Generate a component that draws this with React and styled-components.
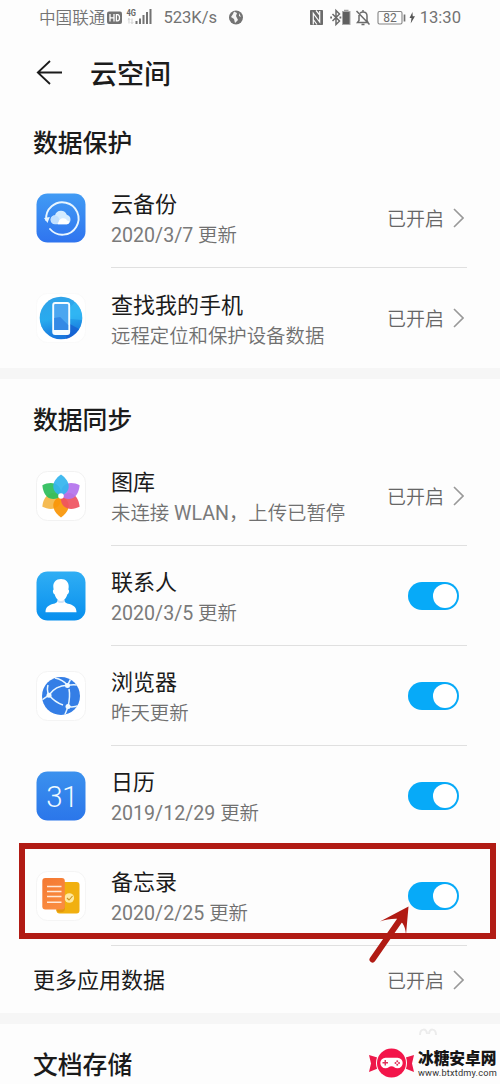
import React from "react";
import styled, { createGlobalStyle } from "styled-components";

const GlobalStyle = createGlobalStyle`
  * { box-sizing: border-box; }
  body { margin: 0; background: #fdfdfd; overflow: hidden; }
`;

const Screen = styled.main`
  position: relative;
  width: 500px;
  height: 1084px;
  overflow: hidden;
  background: #fdfdfd;
  color: #1b1b1b;
  font-family: Roboto, "Noto Sans CJK SC", sans-serif;
  white-space: nowrap;
`;

const StatusBar = styled.header`
  display: flex;
  align-items: center;
  height: 35px;
  padding: 0 39px 0 39px;
  color: #737373;
  font-size: 16.6px;
  line-height: 35px;
`;

const Carrier = styled.span`
  padding-top: 2px;
  font-weight: 350;
`;

const StatusIcon = styled.svg`
  display: block;
  flex: none;
  width: ${(p) => p.$w}px;
  height: 20px;
  margin-left: ${(p) => p.$gap || 0}px;
  overflow: visible;
`;

const Speed = styled.span`
  margin-left: 11px;
  font-size: 16.6px;
`;

const StatusRight = styled.div`
  display: flex;
  align-items: center;
  margin-left: auto;
`;

const Clock = styled.span`
  margin-left: 5px;
  font-size: 16.6px;
`;

const TitleBar = styled.div`
  display: flex;
  align-items: center;
  gap: 27px;
  height: 76px;
  padding-left: 36px;
`;

const PageTitle = styled.h1`
  margin: 0;
  padding-top: 4px;
  font-size: 27px;
  font-weight: 500;
  line-height: 40px;
`;

const SectionTitle = styled.h2`
  height: ${(p) => p.$h}px;
  margin: 0;
  padding: ${(p) => p.$top}px 0 0 33px;
  font-size: 24.8px;
  font-weight: 500;
  line-height: 36px;
`;

const Band = styled.div`
  height: ${(p) => p.$h}px;
  background: #f6f6f6;
`;

const Row = styled.div`
  display: flex;
  height: 100px;
  padding: 0 33px 0 36px;
`;

const AppIcon = styled.svg`
  display: block;
  flex: none;
  width: 50px;
  height: 50px;
  margin: 25px 25px 0 0;
  overflow: visible;
`;

const RowBody = styled.div`
  display: flex;
  flex: 1;
  align-items: center;
  justify-content: space-between;
  border-bottom: 1px solid ${(p) => (p.$last ? "transparent" : "#e0e0e0")};
`;

const RowTitle = styled.div`
  font-size: 22px;
  line-height: 30px;
`;

const RowNote = styled.div`
  margin-top: 1px;
  color: #707070;
  font-size: 19.4px;
  font-weight: 350;
  line-height: 30px;
`;

const Latin = styled.span`
  color: #7a7a7a;
  font-size: 19.6px;
  font-weight: 400;
`;

const RowText = styled.div`
  padding-top: ${(p) => (p.$last ? 8 : 6.5)}px;
`;

const StatusLink = styled.div`
  display: flex;
  align-items: center;
  gap: 9px;
  padding-right: 3px;
  color: #666;
  font-size: 19px;
  font-weight: 350;
  line-height: 30px;
`;

const LinkLabel = styled.span`
  padding-top: 4px;
`;

const Switch = styled.div`
  display: flex;
  align-items: center;
  justify-content: flex-end;
  width: 51px;
  height: 28px;
  margin: 1px 8px 0 0;
  padding-right: 2.5px;
  border-radius: 14px;
  background: #07aaf8;
`;

const Knob = styled.span`
  width: 24px;
  height: 24px;
  border-radius: 50%;
  background: #fff;
`;

const MoreRow = styled.div`
  display: flex;
  align-items: center;
  justify-content: space-between;
  height: 67px;
  padding: 0 33px;
  font-size: 22px;
`;

const MoreLabel = styled.span`
  padding-bottom: 4px;
`;

const Highlight = styled.div`
  position: absolute;
  left: 19px;
  top: 843px;
  width: 477px;
  height: 96px;
  border: 6px solid #b11b14;
`;

const Pointer = styled.svg`
  position: absolute;
  left: 366px;
  top: 904px;
  width: 46px;
  height: 62px;
`;

const FaintMark = styled.svg`
  position: absolute;
  left: 418px;
  top: 1027px;
`;

const Brand = styled.div`
  position: absolute;
  left: 369px;
  top: 1047px;
  display: flex;
  align-items: center;
  gap: 4px;
`;

const BrandName = styled.div`
  color: #151515;
  font-family: "Noto Sans CJK SC", sans-serif;
  font-size: 15.7px;
  font-weight: 900;
  line-height: 19px;
`;

const BrandUrl = styled.div`
  color: #333;
  font-family: Roboto, sans-serif;
  font-size: 9.2px;
  letter-spacing: 0.2px;
  line-height: 11px;
`;

function Tile({ fill = "#fff", stroke = "none" }) {
  return <rect x="0.5" y="0.5" width="49" height="49" rx="11" fill={fill} stroke={stroke} />;
}

function BackupIcon() {
  return (
    <AppIcon viewBox="0 0 50 50">
      <defs>
        <linearGradient id="backup" x2="0" y2="1">
          <stop stopColor="#419bf4" /><stop offset="1" stopColor="#2f74ef" />
        </linearGradient>
      </defs>
      <Tile fill="url(#backup)" />
      <path d="M10.200 27A16.200 16.200 0 1 1 14 36" fill="none" stroke="#e8f6ff" strokeWidth="1.900" strokeLinecap="round" />
      <path d="M8 25l5.800-1-2.300 6z" fill="#e8f6ff" />
      <path d="M19 31.200a4.500 4.500 0 0 1 0-9 6.300 6.300 0 0 1 11.800-.5 4.900 4.900 0 0 1 0 9.500z" fill="#d5ecff" />
      <path d="M22 31.200c0-7 8-7.500 9-3.700 3 0 3 3.700 0 3.700z" fill="#fff" />
      <circle cx="19" cy="26.800" r="4.200" fill="#b8dcff" opacity=".7" />
    </AppIcon>
  );
}

function FindPhoneIcon() {
  return (
    <AppIcon viewBox="0 0 50 50">
      <defs>
        <linearGradient id="find" x2="0.2" y2="1">
          <stop stopColor="#31a1e8" /><stop offset=".55" stopColor="#28abee" /><stop offset="1" stopColor="#1776dd" />
        </linearGradient>
      </defs>
      <Tile stroke="#fafafa" />
      <circle cx="25" cy="25" r="21.300" fill="url(#find)" />
      <path d="M25 25L39 9a21.300 21.300 0 0 1 7 18z" fill="#36bcf6" opacity=".6" />
      <path d="M32 30l11 6a21.300 21.300 0 0 1-13 10z" fill="#1559ce" opacity=".65" />
      <rect x="17.200" y="10" width="16" height="31" rx="2" fill="#4ba6f0" stroke="#f5fcff" strokeWidth="1.900" />
      <path d="M18.200 37V25l6-1 8 8v5z" fill="#3489e5" />
      <path d="M17.500 37h15.400v3.500H17.500z" fill="#f5fcff" />
    </AppIcon>
  );
}

const PETALS = [
  [240, "#f4b646"],
  [180, "#f99608"],
  [300, "#2dbd5b"],
  [120, "#ef5360"],
  [60, "#b473ed"],
  [0, "#35b5ee"],
];

function GalleryIcon() {
  return (
    <AppIcon viewBox="0 0 50 50">
      <Tile stroke="#f2f2f2" />
      {PETALS.map(([angle, color]) => (
        <path
          key={angle}
          d="M25 25c-3.500-1.500-6.800-4-7.600-8C16.500 11.500 20.500 6.500 25 3.500c4.500 3 8.500 8 7.600 13.500-.8 4-4.100 6.500-7.600 8z"
          fill={color}
          opacity=".93"
          transform={`rotate(${angle} 25 25)`}
        />
      ))}
      <circle cx="25" cy="25" r="2.800" fill="#fff" />
    </AppIcon>
  );
}

function ContactsIcon() {
  return (
    <AppIcon viewBox="0 0 50 50">
      <defs>
        <linearGradient id="contacts" x2="0" y2="1">
          <stop stopColor="#30aef4" /><stop offset="1" stopColor="#078fee" />
        </linearGradient>
      </defs>
      <Tile fill="url(#contacts)" />
      <path d="M9.500 41.300c0-4.800 2.800-6.800 7-8.200 3.700-1.200 5-1.800 5-3.700h7c0 1.900 1.300 2.500 5 3.700 4.200 1.400 7 3.400 7 8.200z" fill="#fff" />
      <path d="M21.500 28.500h7v2c-1 2-6 2-7 0z" fill="#d5e5f7" />
      <path d="M25 8c5 0 8 3.300 7.700 8l-.3 2.500c1.300.7.5 4.500-1 4.800C30.500 27 28 30 25 30s-5.500-3-6.400-6.700c-1.500-.3-2.300-4.100-1-4.800l-.3-2.500C17 11.300 20 8 25 8z" fill="#fff" />
    </AppIcon>
  );
}

function BrowserIcon() {
  return (
    <AppIcon viewBox="0 0 50 50">
      <defs>
        <clipPath id="globe"><circle cx="25" cy="25" r="19" /></clipPath>
      </defs>
      <Tile stroke="#f4f4f4" />
      <circle cx="25" cy="25" r="19" fill="#347ee6" />
      <g clipPath="url(#globe)" fill="none" stroke="#e8f6ff" strokeWidth="1.500">
        <path d="M19 7c5 1 9 3 12.500 7.200 3-.5 6-1 10-.2" />
        <path d="M31.500 14.400l3-6" />
        <path d="M13 24c4-6 10-9.500 18.500-9.800" />
        <path d="M6 29l7-5c-2-3-2-6-1-10" />
        <path d="M13 24c4 5 8 8 14 10" />
        <path d="M33 18c1 5 .6 11-1 17.500" />
        <path d="M28 46c1-3 3-7 4-10.500 4 1 7 .5 11-1" />
      </g>
      <circle cx="31.500" cy="14.400" r="2.500" fill="#f2faff" />
      <circle cx="13" cy="24.300" r="2.500" fill="#f2faff" />
      <circle cx="32" cy="35.500" r="2.500" fill="#f2faff" />
    </AppIcon>
  );
}

function CalendarIcon() {
  return (
    <AppIcon viewBox="0 0 50 50">
      <defs>
        <linearGradient id="calendar" x2="0" y2="1">
          <stop stopColor="#3b91ee" /><stop offset="1" stopColor="#2b76ea" />
        </linearGradient>
      </defs>
      <Tile fill="url(#calendar)" />
      <text x="26" y="35.800" textAnchor="middle" fill="#eefaff" fontFamily="Roboto, sans-serif" fontSize="29.500" fontWeight="300" letterSpacing="-0.600">31</text>
    </AppIcon>
  );
}

function NotesIcon() {
  return (
    <AppIcon viewBox="0 0 50 50">
      <defs>
        <linearGradient id="notes" x2="0.5" y2="1">
          <stop stopColor="#f47832" /><stop offset="1" stopColor="#fa8c40" />
        </linearGradient>
      </defs>
      <Tile stroke="#f5f5f5" />
      <rect x="20.500" y="11" width="23" height="31.500" rx="3" fill="#f1b010" />
      <path d="M20.500 29H29v9c0 3-4 4.500-8.500 2z" fill="#e4980f" />
      <circle cx="33.300" cy="27" r="4.800" fill="#ffe9a0" />
      <path d="M31 27l2 2 3.500-4" fill="none" stroke="#c89422" strokeWidth="1.100" />
      <rect x="6.300" y="7" width="22.500" height="31.500" rx="3" fill="url(#notes)" />
      <path d="M11 15.400h14.500M11 20.600h14.500M11 25.600h14.500M11 31.200h14.500" stroke="#ffe9d8" strokeWidth="1.500" />
    </AppIcon>
  );
}

function Enabled() {
  return (
    <StatusLink>
      <LinkLabel>已开启</LinkLabel>
      <svg width="11" height="20" viewBox="0 0 11 20">
        <path d="M1 1l9 9-9 9" fill="none" stroke="#999" strokeWidth="1.600" />
      </svg>
    </StatusLink>
  );
}

function Item({ icon: Icon, title, note, toggle, last }) {
  return (
    <Row>
      <Icon />
      <RowBody $last={last}>
        <RowText $last={last}>
          <RowTitle>{title}</RowTitle>
          <RowNote>{note}</RowNote>
        </RowText>
        {toggle ? <Switch><Knob /></Switch> : <Enabled />}
      </RowBody>
    </Row>
  );
}

function Status() {
  return (
    <StatusBar>
      <Carrier>中国联通</Carrier>
      <StatusIcon $w={15} $gap={2} viewBox="0 0 15 20">
        <rect y="3.500" width="15" height="12.500" rx="2" fill="#737373" />
        <path d="M3 6v7.500M7 6v7.500M3 9.800h4M9.400 6.600v6.300h1.200c2.500 0 2.500-6.300 0-6.300z" fill="none" stroke="#fff" strokeWidth="1.300" />
      </StatusIcon>
      <StatusIcon $w={26} $gap={4} viewBox="0 0 26 20">
        <text x="0.500" y="7.600" fontSize="9.500" fontWeight="700" fill="#666" textLength="9.500" lengthAdjust="spacingAndGlyphs">4G</text>
        <path d="M3 10.500v5M1.800 11.700L3 10.500l1.200 1.200M6 10.500v5M4.800 14.300L6 15.500l1.200-1.200" fill="none" stroke="#bbb" strokeWidth=".7" />
        <path d="M10.500 13v3M14 10.500v5.500M17.500 7v9M21 4v12M24.500 1v15" stroke="#737373" strokeWidth="2" />
      </StatusIcon>
      <Speed>523K/s</Speed>
      <StatusIcon $w={14} $gap={12} viewBox="0 0 14 20">
        <circle cx="7" cy="9.500" r="7" fill="#737373" />
        <path d="M5 3.500L8 5 7 8l2 4-3 3-1-4-3-2 2-3z" fill="#f4f4f4" />
        <path d="M10 5l2 4-2-1z" fill="#f4f4f4" />
      </StatusIcon>
      <StatusRight>
        <StatusIcon $w={15} viewBox="0 0 15 20">
          <path d="M1.500 2.500h12v14h-12z" fill="#6b6b6b" stroke="#6b6b6b" strokeLinejoin="round" />
          <path d="M4.300 16.500V5.300l6.400 8.700V3M7 2.500l3.700 4.500M4.300 11.500L8 16.500" fill="none" stroke="#fdfdfd" strokeWidth="1.200" />
        </StatusIcon>
        <StatusIcon $w={21} $gap={6} viewBox="0 0 21 20">
          <path d="M2.500 6l7 7L6 16.500v-14L9.500 6l-7 7" fill="none" stroke="#6b6b6b" strokeWidth="1.500" />
          <path d="M.2 8.600h1.800v1.800H.2zM9.500 8.600h1.800v1.800H9.500z" fill="#6b6b6b" />
          <rect x="12.500" y="3.500" width="7.500" height="13" fill="#606060" stroke="#aaa" />
          <path d="M14 2.300h4.500" stroke="#888" />
        </StatusIcon>
        <StatusIcon $w={14} $gap={5} viewBox="0 0 14 20">
          <path d="M3 7v5.500L1.500 14.500H12l-1-2V8c0-2.500-1.500-4-4-4-1.300 0-2.200.4-3 1.200M.5 3l13 13.500M5.500 16.500h3M7 2v2" fill="none" stroke="#6b6b6b" strokeWidth="1.500" />
        </StatusIcon>
        <StatusIcon $w={38} $gap={7} viewBox="0 0 38 20">
          <rect x="1" y="3.500" width="24" height="12.500" rx="1.500" fill="none" stroke="#858585" strokeWidth="1.100" />
          <text x="13" y="14" textAnchor="middle" fontSize="12" fill="#6b6b6b">82</text>
          <path d="M27.500 6.500v7" stroke="#737373" strokeWidth="1.700" />
          <path d="M35.500 4L32.500 10h2l-.8 5.500 4.300-7.200h-2.300z" fill="#555" />
        </StatusIcon>
        <Clock>13:30</Clock>
      </StatusRight>
    </StatusBar>
  );
}

export default function App() {
  return (
    <Screen>
      <GlobalStyle />
      <Status />
      <TitleBar>
        <svg width="27" height="26" viewBox="0 0 27 26">
          <path d="M26 12.500H2M14 1L1.800 12.500 14 24" fill="none" stroke="#1b1b1b" strokeWidth="1.800" />
        </svg>
        <PageTitle>云空间</PageTitle>
      </TitleBar>
      <SectionTitle $h={57} $top={15}>数据保护</SectionTitle>
      <Item icon={BackupIcon} title="云备份" note={<><Latin>2020/3/7 </Latin>更新</>} />
      <Item icon={FindPhoneIcon} title="查找我的手机" note="远程定位和保护设备数据" last />
      <Band $h={11} />
      <SectionTitle $h={67} $top={24}>数据同步</SectionTitle>
      <Item icon={GalleryIcon} title="图库" note={<>未连接<Latin> WLAN</Latin>，上传已暂停</>} />
      <Item icon={ContactsIcon} title="联系人" note={<><Latin>2020/3/5 </Latin>更新</>} toggle />
      <Item icon={BrowserIcon} title="浏览器" note="昨天更新" toggle />
      <Item icon={CalendarIcon} title="日历" note={<><Latin>2019/12/29 </Latin>更新</>} toggle />
      <Item icon={NotesIcon} title="备忘录" note={<><Latin>2020/2/25 </Latin>更新</>} toggle />
      <MoreRow>
        <MoreLabel>更多应用数据</MoreLabel>
        <Enabled />
      </MoreRow>
      <Band $h={11} />
      <SectionTitle $h={60} $top={24}>文档存储</SectionTitle>

      <Highlight />
      <Pointer viewBox="0 0 46 62">
        <path d="M42.500 2.500L14 17.500c6-2 11-3 17-2.800l5.500 4.500c2 3 3 6 3.500 11.500z" fill="#b11b14" />
        <path d="M36 13L6.500 55.500" stroke="#b11b14" strokeWidth="6" strokeLinecap="round" />
      </Pointer>
      <FaintMark width="20" height="10" viewBox="0 0 20 10">
        <path d="M2 8c0-7 7-7 7-1M11 7c0-6 7-6 7 1" fill="none" stroke="#ececec" strokeWidth="2" />
      </FaintMark>
      <Brand>
        <svg width="45" height="32" viewBox="0 0 45 32">
          <path d="M0 8l10 3v10L0 25l2-8.500zM45 8l-10 3v10l10 4-2-8.500z" fill="#ed1849" />
          <circle cx="22.500" cy="16" r="15.500" fill="#fdfdfd" />
          <circle cx="22.500" cy="16" r="14.500" fill="#f3154a" />
          <path d="M16.500 10.800h12a5.200 5.200 0 0 1 0 10.400c-3 0-3.500-2-6-2s-3 2-6 2a5.200 5.200 0 0 1 0-10.400z" fill="#fff" />
          <path d="M13.500 15.800h5.500M16.250 13v5.600" stroke="#e0305a" strokeWidth="1.400" />
          <circle cx="26.500" cy="16" r="1" fill="#e0305a" /><circle cx="30" cy="16" r="1" fill="#e0305a" />
          <circle cx="28.250" cy="14.200" r="1" fill="#e0305a" /><circle cx="28.250" cy="17.800" r="1" fill="#e0305a" />
        </svg>
        <div>
          <BrandName>冰糖安卓网</BrandName>
          <BrandUrl>www.btxtdmy.com</BrandUrl>
        </div>
      </Brand>
    </Screen>
  );
}
